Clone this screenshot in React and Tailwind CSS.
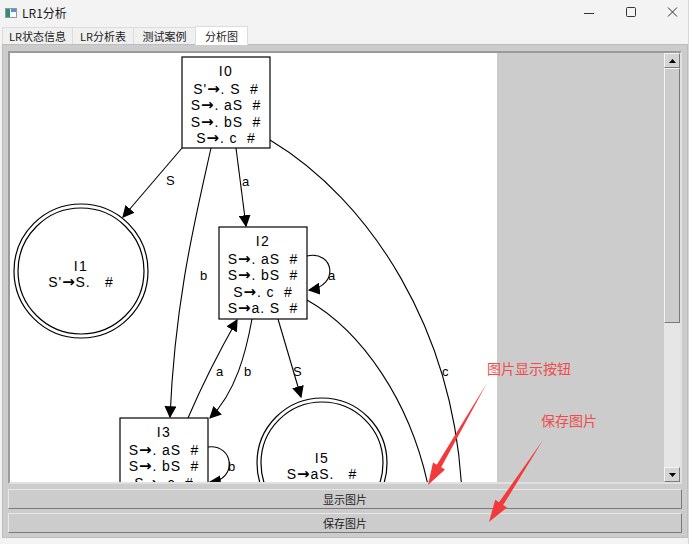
import React from 'react';

const cjk = { fontFamily: '"Noto Sans CJK SC", "Noto Sans", sans-serif' };

function TitleBar() {
  return (
    <div className="h-[26px] flex items-center bg-[#f3f3f3] rounded-tr-[8px]">
      <svg width="12" height="12" viewBox="0 0 12 12" className="ml-[5px]">
        <rect x="0.5" y="1.5" width="11" height="9" fill="#ffffff" stroke="#8a9aa8" />
        <rect x="1" y="2" width="4" height="8" fill="#2f8f6f" />
        <rect x="6" y="2" width="5" height="3" fill="#5b8fd0" />
      </svg>
      <span className="ml-[5px] text-[12px] text-[#1a1a1a]">LR1分析</span>
      <div className="ml-auto -mr-[6px] flex items-center">
        <svg width="46" height="26" viewBox="0 0 46 26">
          <line x1="18" y1="13.5" x2="28" y2="13.5" stroke="#333" />
        </svg>
        <svg width="40" height="26" viewBox="0 0 40 26">
          <rect x="14.5" y="7.5" width="9" height="9" rx="1" fill="none" stroke="#333" />
        </svg>
        <svg width="42" height="26" viewBox="0 0 42 26">
          <path d="M16 7.5 L25 16.5 M25 7.5 L16 16.5" stroke="#333" />
        </svg>
      </div>
    </div>
  );
}

function Tabs() {
  const tabs = [
    { label: 'LR状态信息', w: 'w-[70px]' },
    { label: 'LR分析表', w: 'w-[61px]' },
    { label: '测试案例', w: 'w-[62px]' },
  ];
  return (
    <div className="h-[18px] flex items-end pl-[2px] bg-[#f3f3f3]">
      {tabs.map((t) => (
        <div
          key={t.label}
          className={`${t.w} h-[17px] flex items-center justify-center text-[11px] text-[#222] bg-[#f0f0f0] border-t border-l border-[#dcdcdc]`}
        >
          {t.label}
        </div>
      ))}
      <div className="w-[53px] h-[19px] -mb-[1px] flex items-center justify-center text-[11px] text-[#222] bg-white border-t border-l border-r border-[#dcdcdc] relative z-10">
        分析图
      </div>
    </div>
  );
}

// a production line like "S→. aS  #": the arrow is drawn in DejaVu so it reads heavier
function Prod({ x, y, text }) {
  const [left, right] = text.split('→');
  return (
    <text x={x} y={y} textAnchor="middle" fontSize="14" letterSpacing="0.9" className="whitespace-pre">
      {left}
      <tspan fontFamily='"DejaVu Sans", sans-serif' fontWeight="bold" fontSize="15">→</tspan>
      {right}
    </text>
  );
}

function Node({ x, y, w, h, title, lines }) {
  return (
    <g>
      <rect x={x} y={y} width={w} height={h} fill="#fff" stroke="#000" strokeWidth="1.2" />
      <text x={x + w / 2} y={y + 19} textAnchor="middle" fontSize="14" letterSpacing="1.5">{title}</text>
      {lines.map((l, i) => (
        <Prod key={i} x={x + w / 2} y={y + 37 + i * 16.3} text={l} />
      ))}
    </g>
  );
}

function DoubleCircle({ cx, cy, r, title, line }) {
  return (
    <g>
      <circle cx={cx} cy={cy} r={r} fill="#fff" stroke="#000" strokeWidth="1.2" />
      <circle cx={cx} cy={cy} r={r - 4} fill="none" stroke="#000" strokeWidth="1.2" />
      <text x={cx} y={cy} textAnchor="middle" fontSize="14" letterSpacing="1.5">{title}</text>
      <Prod x={cx} y={cy + 16} text={line} />
    </g>
  );
}

function Graph() {
  const edge = { fill: 'none', stroke: '#000', strokeWidth: 1.1, markerEnd: 'url(#ah)' };
  const plain = { fill: 'none', stroke: '#000', strokeWidth: 1.1 };
  return (
    <svg width="487" height="429" className="block" style={{ fontFamily: '"Liberation Sans", Arial, sans-serif' }}>
      <defs>
        <marker id="ah" viewBox="0 0 10 10" refX="9" refY="5" markerWidth="12" markerHeight="12" markerUnits="userSpaceOnUse" orient="auto">
          <path d="M0 0 L10 5 L0 10 Z" fill="#000" />
        </marker>
      </defs>
      <g transform="translate(-10,-53)">
        <path d="M182 148 L123 217" {...edge} />
        <path d="M236 148 L246 226" {...edge} />
        <path d="M211 148 C195 220 175 300 170 417" {...edge} />
        <path d="M270 140 C370 200 455 330 462 495" {...plain} />
        <path d="M307 300 C360 330 412 400 430 495" {...plain} />
        <path d="M307 256 C334 250 340 286 309 290" {...edge} />
        <path d="M252 319 C246 352 236 392 210 418" {...edge} />
        <path d="M188 418 C200 390 220 350 237 320" {...edge} />
        <path d="M278 319 L301 397" {...edge} />
        <path d="M208 447 C234 444 238 480 210 482" {...edge} />

        <Node x={182} y={57} w={88} h={91} title="I0" lines={["S'→. S  #", 'S→. aS  #', 'S→. bS  #', 'S→. c  #']} />
        <Node x={219} y={227} w={88} h={92} title="I2" lines={['S→. aS  #', 'S→. bS  #', 'S→. c  #', 'S→a. S  #']} />
        <Node x={120} y={418} w={88} h={92} title="I3" lines={['S→. aS  #', 'S→. bS  #', 'S→. c  #']} />
        <DoubleCircle cx={81} cy={271} r={67} title="I1" line={"S'→S.   #"} />
        <DoubleCircle cx={322} cy={463} r={65} title="I5" line={'S→aS.   #'} />

        <g fontSize="13">
          <text x="166" y="185">S</text>
          <text x="242" y="186">a</text>
          <text x="200" y="280">b</text>
          <text x="328" y="280">a</text>
          <text x="216" y="376">a</text>
          <text x="244" y="376">b</text>
          <text x="293" y="376">S</text>
          <text x="442" y="376">c</text>
          <text x="228" y="471">b</text>
        </g>
      </g>
    </svg>
  );
}

function ScrollBar() {
  return (
    <div className="w-[16px] flex flex-col bg-[#e4e4e4]">
      <div className="h-[15px] bg-[#d4d4d4] border-t border-l border-[#f4f4f4] border-r border-b border-r-[#7a7a7a] border-b-[#7a7a7a] flex items-center justify-center">
        <svg width="7" height="4"><path d="M0 4 L3.5 0 L7 4 Z" fill="#000" /></svg>
      </div>
      <div className="h-[255px] bg-[#cccccc] border-t border-l border-[#f4f4f4] border-r border-b border-r-[#7a7a7a] border-b-[#7a7a7a]" />
      <div className="flex-1 bg-[#e6e6e6]" />
      <div className="h-[15px] bg-[#d4d4d4] border-t border-l border-[#f4f4f4] border-r border-b border-r-[#7a7a7a] border-b-[#7a7a7a] flex items-center justify-center">
        <svg width="7" height="4"><path d="M0 0 L3.5 4 L7 0 Z" fill="#000" /></svg>
      </div>
    </div>
  );
}

function Button({ children }) {
  return (
    <div className="h-[20px] flex items-center justify-center bg-[#cccccc] border-t border-l border-[#e8e8e8] border-r border-b border-r-[#7a7a7a] border-b-[#7a7a7a] text-[11px] text-[#222]">
      {children}
    </div>
  );
}

function Annotations() {
  return (
    <div className="absolute inset-0 pointer-events-none">
      <svg width="692" height="544" className="absolute left-0 top-0">
        <polygon points="487,383 441.2,467.3 445,469.5 428,485 433,462.5 436.8,464.8" fill="#f23a3a" />
        <polygon points="543,440 503.2,505 507,507.5 489,522 495.2,499.7 499,502.2" fill="#f23a3a" />
      </svg>
      <div className="absolute left-[487px] top-[359px] text-[14px] leading-[18px] text-[#f04b4b]">图片显示按钮</div>
      <div className="absolute left-[541px] top-[411px] text-[14px] leading-[18px] text-[#f04b4b]">保存图片</div>
    </div>
  );
}

export default function App() {
  return (
    <div className="w-[692px] h-[544px] bg-white relative overflow-hidden" style={cjk}>
      <div className="w-[689px] h-[544px] flex flex-col bg-[#f3f3f3] border-r border-[#d8d8d8] overflow-hidden">
        <TitleBar />
        <Tabs />
        <div className="ml-[2px] w-[686px] h-[494px] bg-[#cccccc] border border-[#bdbdbd] pt-[6px] px-[5px] flex flex-col">
          <div className="h-[433px] flex border-2 border-[#9a9a9a] border-r-[#e0e0e0] border-b-[#e0e0e0]">
            <div className="flex-1 flex bg-[#cccccc] overflow-hidden">
              <div className="w-[487px] bg-white">
                <Graph />
              </div>
            </div>
            <ScrollBar />
          </div>
          <div className="mt-[5px] flex flex-col gap-[4px]">
            <Button>显示图片</Button>
            <Button>保存图片</Button>
          </div>
        </div>
      </div>
      <Annotations />
    </div>
  );
}
